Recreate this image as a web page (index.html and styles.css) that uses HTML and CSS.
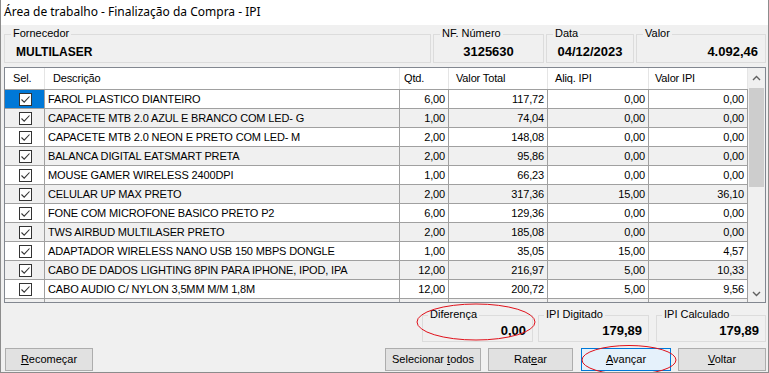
FILE: index.html
```html
<!DOCTYPE html>
<html lang="pt-BR">
<head>
<meta charset="utf-8">
<title>Finalização da Compra - IPI</title>
<link rel="stylesheet" href="styles.css">
</head>
<body>
<div class="window">
  <div class="titlebar">Área de trabalho - Finalização da Compra - IPI</div>
  <div class="client">
    <div class="top-row">
      <div class="group g-forn"><span class="group-label">Fornecedor</span><div class="val val-left val-12">MULTILASER</div></div>
      <div class="group g-nf"><span class="group-label">NF. Número</span><div class="val val-center">3125630</div></div>
      <div class="group g-data"><span class="group-label">Data</span><div class="val val-center">04/12/2023</div></div>
      <div class="group g-valor"><span class="group-label">Valor</span><div class="val val-right">4.092,46</div></div>
    </div>

    <div class="grid">
      <div class="table">
        <div class="row head">
          <div class="c c-sel">Sel.</div>
          <div class="c c-desc">Descrição</div>
          <div class="c c-qtd">Qtd.</div>
          <div class="c c-vt">Valor Total</div>
          <div class="c c-aliq">Aliq. IPI</div>
          <div class="c c-vipi">Valor IPI</div>
        </div>
        <div class="row">
          <div class="c c-sel selected"><span class="chk"><svg viewBox="0 0 13 13" width="13" height="13"><path d="M2.5 6.5 L5.2 9.2 L10.5 3.5" fill="none" stroke="#333" stroke-width="1.1"/></svg></span></div>
          <div class="c c-desc">FAROL PLASTICO DIANTEIRO</div>
          <div class="c c-qtd num">6,00</div><div class="c c-vt num">117,72</div><div class="c c-aliq num">0,00</div><div class="c c-vipi num">0,00</div>
        </div>
        <div class="row alt">
          <div class="c c-sel"><span class="chk"><svg viewBox="0 0 13 13" width="13" height="13"><path d="M2.5 6.5 L5.2 9.2 L10.5 3.5" fill="none" stroke="#333" stroke-width="1.1"/></svg></span></div>
          <div class="c c-desc">CAPACETE MTB 2.0 AZUL E BRANCO COM LED- G</div>
          <div class="c c-qtd num">1,00</div><div class="c c-vt num">74,04</div><div class="c c-aliq num">0,00</div><div class="c c-vipi num">0,00</div>
        </div>
        <div class="row">
          <div class="c c-sel"><span class="chk"><svg viewBox="0 0 13 13" width="13" height="13"><path d="M2.5 6.5 L5.2 9.2 L10.5 3.5" fill="none" stroke="#333" stroke-width="1.1"/></svg></span></div>
          <div class="c c-desc">CAPACETE MTB 2.0 NEON E PRETO COM LED- M</div>
          <div class="c c-qtd num">2,00</div><div class="c c-vt num">148,08</div><div class="c c-aliq num">0,00</div><div class="c c-vipi num">0,00</div>
        </div>
        <div class="row alt">
          <div class="c c-sel"><span class="chk"><svg viewBox="0 0 13 13" width="13" height="13"><path d="M2.5 6.5 L5.2 9.2 L10.5 3.5" fill="none" stroke="#333" stroke-width="1.1"/></svg></span></div>
          <div class="c c-desc">BALANCA DIGITAL EATSMART PRETA</div>
          <div class="c c-qtd num">2,00</div><div class="c c-vt num">95,86</div><div class="c c-aliq num">0,00</div><div class="c c-vipi num">0,00</div>
        </div>
        <div class="row">
          <div class="c c-sel"><span class="chk"><svg viewBox="0 0 13 13" width="13" height="13"><path d="M2.5 6.5 L5.2 9.2 L10.5 3.5" fill="none" stroke="#333" stroke-width="1.1"/></svg></span></div>
          <div class="c c-desc">MOUSE GAMER WIRELESS 2400DPI</div>
          <div class="c c-qtd num">1,00</div><div class="c c-vt num">66,23</div><div class="c c-aliq num">0,00</div><div class="c c-vipi num">0,00</div>
        </div>
        <div class="row alt">
          <div class="c c-sel"><span class="chk"><svg viewBox="0 0 13 13" width="13" height="13"><path d="M2.5 6.5 L5.2 9.2 L10.5 3.5" fill="none" stroke="#333" stroke-width="1.1"/></svg></span></div>
          <div class="c c-desc">CELULAR UP MAX PRETO</div>
          <div class="c c-qtd num">2,00</div><div class="c c-vt num">317,36</div><div class="c c-aliq num">15,00</div><div class="c c-vipi num">36,10</div>
        </div>
        <div class="row">
          <div class="c c-sel"><span class="chk"><svg viewBox="0 0 13 13" width="13" height="13"><path d="M2.5 6.5 L5.2 9.2 L10.5 3.5" fill="none" stroke="#333" stroke-width="1.1"/></svg></span></div>
          <div class="c c-desc">FONE COM MICROFONE BASICO PRETO P2</div>
          <div class="c c-qtd num">6,00</div><div class="c c-vt num">129,36</div><div class="c c-aliq num">0,00</div><div class="c c-vipi num">0,00</div>
        </div>
        <div class="row alt">
          <div class="c c-sel"><span class="chk"><svg viewBox="0 0 13 13" width="13" height="13"><path d="M2.5 6.5 L5.2 9.2 L10.5 3.5" fill="none" stroke="#333" stroke-width="1.1"/></svg></span></div>
          <div class="c c-desc">TWS AIRBUD MULTILASER PRETO</div>
          <div class="c c-qtd num">2,00</div><div class="c c-vt num">185,08</div><div class="c c-aliq num">0,00</div><div class="c c-vipi num">0,00</div>
        </div>
        <div class="row">
          <div class="c c-sel"><span class="chk"><svg viewBox="0 0 13 13" width="13" height="13"><path d="M2.5 6.5 L5.2 9.2 L10.5 3.5" fill="none" stroke="#333" stroke-width="1.1"/></svg></span></div>
          <div class="c c-desc">ADAPTADOR WIRELESS NANO USB 150 MBPS DONGLE</div>
          <div class="c c-qtd num">1,00</div><div class="c c-vt num">35,05</div><div class="c c-aliq num">15,00</div><div class="c c-vipi num">4,57</div>
        </div>
        <div class="row alt">
          <div class="c c-sel"><span class="chk"><svg viewBox="0 0 13 13" width="13" height="13"><path d="M2.5 6.5 L5.2 9.2 L10.5 3.5" fill="none" stroke="#333" stroke-width="1.1"/></svg></span></div>
          <div class="c c-desc">CABO DE DADOS LIGHTING 8PIN PARA IPHONE, IPOD, IPA</div>
          <div class="c c-qtd num">12,00</div><div class="c c-vt num">216,97</div><div class="c c-aliq num">5,00</div><div class="c c-vipi num">10,33</div>
        </div>
        <div class="row">
          <div class="c c-sel"><span class="chk"><svg viewBox="0 0 13 13" width="13" height="13"><path d="M2.5 6.5 L5.2 9.2 L10.5 3.5" fill="none" stroke="#333" stroke-width="1.1"/></svg></span></div>
          <div class="c c-desc">CABO AUDIO C/ NYLON 3,5MM M/M 1,8M</div>
          <div class="c c-qtd num">12,00</div><div class="c c-vt num">200,72</div><div class="c c-aliq num">5,00</div><div class="c c-vipi num">9,56</div>
        </div>
        <div class="row alt">
          <div class="c c-sel"><span class="chk"></span></div>
          <div class="c c-desc"></div>
          <div class="c c-qtd num"></div><div class="c c-vt num"></div><div class="c c-aliq num"></div><div class="c c-vipi num"></div>
        </div>
      </div>
      <div class="vscroll">
        <div class="sb-btn sb-up"><svg width="9" height="6" viewBox="0 0 9 6"><path d="M1 5 L4.5 1.5 L8 5" fill="none" stroke="#606060" stroke-width="1.4"/></svg></div>
        <div class="sb-thumb"></div>
        <div class="sb-track"></div>
        <div class="sb-btn sb-down"><svg width="9" height="6" viewBox="0 0 9 6"><path d="M1 1 L4.5 4.5 L8 1" fill="none" stroke="#606060" stroke-width="1.4"/></svg></div>
      </div>
    </div>

    <div class="bottom-row">
      <div class="group g-dif"><span class="group-label">Diferença</span><div class="val val-right">0,00</div></div>
      <div class="group g-dig"><span class="group-label">IPI Digitado</span><div class="val val-right">179,89</div></div>
      <div class="group g-calc"><span class="group-label">IPI Calculado</span><div class="val val-right">179,89</div></div>
    </div>

    <div class="buttons">
      <div class="btn b-rec"><u>R</u>ecomeçar</div>
      <div class="spacer"></div>
      <div class="btn b-sel">Selecionar <u>t</u>odos</div>
      <div class="btn b-rat">Rat<u>e</u>ar</div>
      <div class="btn b-av focused"><u>A</u>vançar</div>
      <div class="btn b-vol"><u>V</u>oltar</div>
    </div>
  </div>

  <svg class="ann ann-1" width="122" height="40" viewBox="0 0 122 40"><ellipse cx="61" cy="20" rx="59" ry="18" fill="none" stroke="#e0101a" stroke-width="1"/></svg>
  <svg class="ann ann-2" width="98" height="32" viewBox="0 0 98 32"><ellipse cx="49" cy="16" rx="47" ry="14.5" fill="none" stroke="#e0101a" stroke-width="1"/></svg>
</div>
</body>
</html>
```

FILE: styles.css
```css
* { box-sizing: border-box; }

html, body {
  margin: 0;
  padding: 0;
  background: #f0f0f0;
}

body {
  font-family: "Liberation Sans", Arial, sans-serif;
  font-size: 11px;
  color: #000;
}

.window {
  position: relative;
  width: 769px;
  height: 373px;
  background: #f0f0f0;
  border-left: 1px solid #8c8c8c;
  border-right: 1px solid #8c8c8c;
  border-bottom: 1px solid #8c8c8c;
  display: flex;
  flex-direction: column;
  overflow: hidden;
}

.titlebar {
  flex: none;
  height: 25px;
  background: #fff;
  padding-left: 3px;
  font-family: "Noto Sans", "Liberation Sans", sans-serif;
  font-size: 12px;
  line-height: 24px;
  color: #000;
  white-space: nowrap;
}

.client {
  flex: 1;
  display: flex;
  flex-direction: column;
  padding: 0 2px 0 3px;
}

/* group boxes */
.top-row {
  display: flex;
  gap: 2px;
  margin-top: 9px;
  height: 29px;
  flex: none;
}

.group {
  position: relative;
  border: 1px solid #dcdcdc;
  height: 100%;
}

.group-label {
  position: absolute;
  left: 6px;
  top: -9px;
  padding: 0 2px;
  line-height: 14px;
  background: #f0f0f0;
  white-space: nowrap;
}

.g-forn { width: 427px; }
.g-nf { width: 111px; }
.g-data { width: 88px; }
.g-valor { width: 130px; }

.val {
  font-weight: bold;
  font-size: 13px;
  line-height: 16px;
  padding-top: 9px;
  white-space: nowrap;
}
.val-12 { font-size: 12px; }
.val-left { padding-left: 11px; }
.val-center { text-align: center; }
.val-right { text-align: right; padding-right: 7px; }

/* grid */
.grid {
  flex: none;
  margin-top: 4px;
  height: 236px;
  border: 1px solid #828790;
  background: #fff;
  display: flex;
  overflow: hidden;
}

.table {
  width: 743px;
  flex: none;
  display: flex;
  flex-direction: column;
}

.row {
  display: flex;
  height: 19px;
  flex: none;
  border-bottom: 1px solid #a0a0a0;
  background: #fff;
}
.row.alt { background: #f0f0f0; }

.row.head {
  height: 22px;
  background: #fff;
}

.c {
  border-right: 1px solid #a0a0a0;
  line-height: 18px;
  padding: 0 3px;
  white-space: nowrap;
  overflow: hidden;
  letter-spacing: -0.15px;
}
.head .c {
  line-height: 21px;
  border-right-color: #e5e5e5;
  padding-left: 6px;
}
.head .c-sel { padding-left: 8px; }
.head .c-desc { padding-left: 8px; }
.head .c-qtd { padding-left: 4px; }
.head .c-vt { padding-left: 7px; }
.head .c-aliq { padding-left: 7px; }

.c-sel { width: 40px; display: flex; justify-content: center; align-items: center; }
.head .c-sel { display: block; }
.c-desc { width: 355px; }
.c-qtd { width: 49px; }
.c-vt { width: 99px; }
.c-aliq { width: 101px; }
.c-vipi { width: 99px; }

.num { text-align: right; padding-right: 3px; }

.selected { background: #0078d7; }

.chk {
  display: block;
  width: 13px;
  height: 13px;
  border: 1px solid #333;
  background: #fff;
  position: relative;
  margin-left: 1px;
}
.chk svg {
  display: block;
  margin: -1px 0 0 -1px;
}

/* scrollbar */
.vscroll {
  flex: 1;
  display: flex;
  flex-direction: column;
  background: #f0f0f0;
  padding: 0 1px;
}
.sb-btn {
  height: 20px;
  flex: none;
  display: flex;
  align-items: center;
  justify-content: center;
}
.sb-down { height: 17px; }
.sb-thumb {
  height: 99px;
  flex: none;
  background: #cdcdcd;
}
.sb-track { flex: 1; }

/* bottom summary */
.bottom-row {
  flex: none;
  display: flex;
  justify-content: flex-end;
  margin-top: 12px;
  height: 27px;
}
.bottom-row .group-label { left: 5px; }
.bottom-row .val { padding-top: 7px; padding-right: 6px; }
.g-dif { width: 111px; margin-right: 5px; }
.g-dig { width: 111px; margin-right: 7px; }
.g-calc { width: 110px; }

/* buttons */
.buttons {
  flex: none;
  display: flex;
  margin-top: 6px;
  height: 23px;
  padding-left: 1px;
}
.spacer { flex: 1; }
.btn {
  height: 23px;
  background: #e1e1e1;
  border: 1px solid #adadad;
  line-height: 21px;
  text-align: center;
  white-space: nowrap;
}
.btn u { text-decoration: underline; text-underline-offset: 1px; }
.b-rec { width: 88px; }
.b-sel { width: 96px; margin-right: 7px; }
.b-rat { width: 85px; margin-right: 8px; }
.b-av { width: 90px; margin-right: 7px; }
.b-vol { width: 88px; }
.focused {
  background: #e5f1fb;
  border-color: #0078d7;
}

/* annotations drawn over the screenshot */
.ann { position: absolute; pointer-events: none; }
.ann-1 { left: 414px; top: 302px; }
.ann-2 { left: 579px; top: 344px; }
```
